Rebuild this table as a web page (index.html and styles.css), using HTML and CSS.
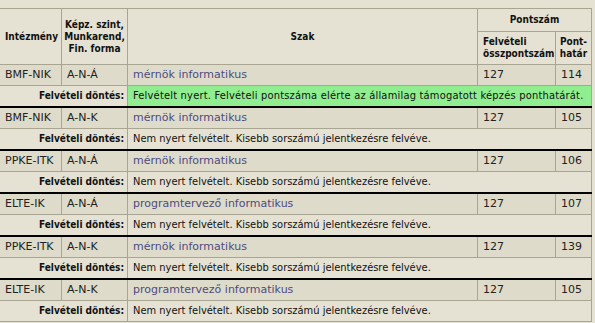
FILE: index.html
```html
<!DOCTYPE html>
<html lang="hu">
<head>
<meta charset="utf-8">
<title>Felvételi eredmények</title>
<link rel="stylesheet" href="styles.css">
</head>
<body>
<table class="res">
<colgroup>
<col class="c1"><col class="c2"><col class="c3"><col class="c4"><col class="c5">
</colgroup>
<thead>
<tr class="h1">
<th rowspan="2">Intézmény</th>
<th rowspan="2">Képz. szint,<br>Munkarend,<br>Fin. forma</th>
<th rowspan="2">Szak</th>
<th colspan="2" class="ph">Pontszám</th>
</tr>
<tr class="h2">
<th>Felvételi<br>összpontszám</th>
<th>Pont-<br>határ</th>
</tr>
</thead>
<tbody>
<tr class="data"><td>BMF-NIK</td><td>A-N-Á</td><td class="szak">mérnök informatikus</td><td>127</td><td>114</td></tr>
<tr class="dec"><td colspan="2" class="lbl">Felvételi döntés:</td><td colspan="3" class="msg ok">Felvételt nyert. Felvételi pontszáma elérte az államilag támogatott képzés ponthatárát.</td></tr>
<tr class="data"><td>BMF-NIK</td><td>A-N-K</td><td class="szak">mérnök informatikus</td><td>127</td><td>105</td></tr>
<tr class="dec"><td colspan="2" class="lbl">Felvételi döntés:</td><td colspan="3" class="msg">Nem nyert felvételt. Kisebb sorszámú jelentkezésre felvéve.</td></tr>
<tr class="data"><td>PPKE-ITK</td><td>A-N-Á</td><td class="szak">mérnök informatikus</td><td>127</td><td>106</td></tr>
<tr class="dec"><td colspan="2" class="lbl">Felvételi döntés:</td><td colspan="3" class="msg">Nem nyert felvételt. Kisebb sorszámú jelentkezésre felvéve.</td></tr>
<tr class="data"><td>ELTE-IK</td><td>A-N-Á</td><td class="szak">programtervező informatikus</td><td>127</td><td>107</td></tr>
<tr class="dec"><td colspan="2" class="lbl">Felvételi döntés:</td><td colspan="3" class="msg">Nem nyert felvételt. Kisebb sorszámú jelentkezésre felvéve.</td></tr>
<tr class="data"><td>PPKE-ITK</td><td>A-N-K</td><td class="szak">mérnök informatikus</td><td>127</td><td>139</td></tr>
<tr class="dec"><td colspan="2" class="lbl">Felvételi döntés:</td><td colspan="3" class="msg">Nem nyert felvételt. Kisebb sorszámú jelentkezésre felvéve.</td></tr>
<tr class="data"><td>ELTE-IK</td><td>A-N-K</td><td class="szak">programtervező informatikus</td><td>127</td><td>105</td></tr>
<tr class="dec last"><td colspan="2" class="lbl">Felvételi döntés:</td><td colspan="3" class="msg">Nem nyert felvételt. Kisebb sorszámú jelentkezésre felvéve.</td></tr>
</tbody>
</table>
</body>
</html>
```

FILE: styles.css
```css
html, body {
  margin: 0;
  padding: 0;
  background: #e6e2d3;
}
body {
  padding-top: 8px;
  font-family: "DejaVu Sans", Verdana, sans-serif;
  font-size: 11px;
  color: #222;
}
.res {
  border-collapse: collapse;
  table-layout: fixed;
  width: 592px;
  margin-left: -1px;
}
.c1 { width: 62px; }
.c2 { width: 66px; }
.c3 { width: 350px; }
.c4 { width: 78px; }
.c5 { width: 36px; }
.res th, .res td {
  border: 1px solid #a9a593;
  padding: 0 4px 0 5px;
}
.res th {
  background: #e6e2d3;
  font-family: "DejaVu Sans Condensed", Tahoma, sans-serif;
  font-weight: bold;
  font-size: 10px;
  line-height: 12px;
  color: #111;
  text-align: center;
  padding: 0 2px;
  white-space: nowrap;
}
.res thead th:first-child { text-align: left; padding-left: 5px; }
.h1 th { height: 22px; }
.h2 th { height: 32px; }
.data td {
  background: #dfdbca;
  height: 20px;
  line-height: 14px;
  white-space: nowrap;
  overflow: hidden;
}
.data td.szak { color: #4c4c80; }
.dec td {
  background: #e6e2d3;
  height: 20px;
  line-height: 14px;
  border-bottom: 2px solid #000;
  white-space: nowrap;
  overflow: hidden;
}
.dec.last td { border-bottom: 1px solid #a9a593; }
.dec td.lbl {
  text-align: right;
  padding-right: 3px;
  font-family: "DejaVu Sans Condensed", Tahoma, sans-serif;
  font-weight: bold;
  font-size: 10px;
  color: #111;
}
.dec td.msg {
  font-family: "DejaVu Sans Condensed", Tahoma, sans-serif;
  color: #111;
}
.dec td.ok { background: #90ee90; letter-spacing: 0.2px; }
```
